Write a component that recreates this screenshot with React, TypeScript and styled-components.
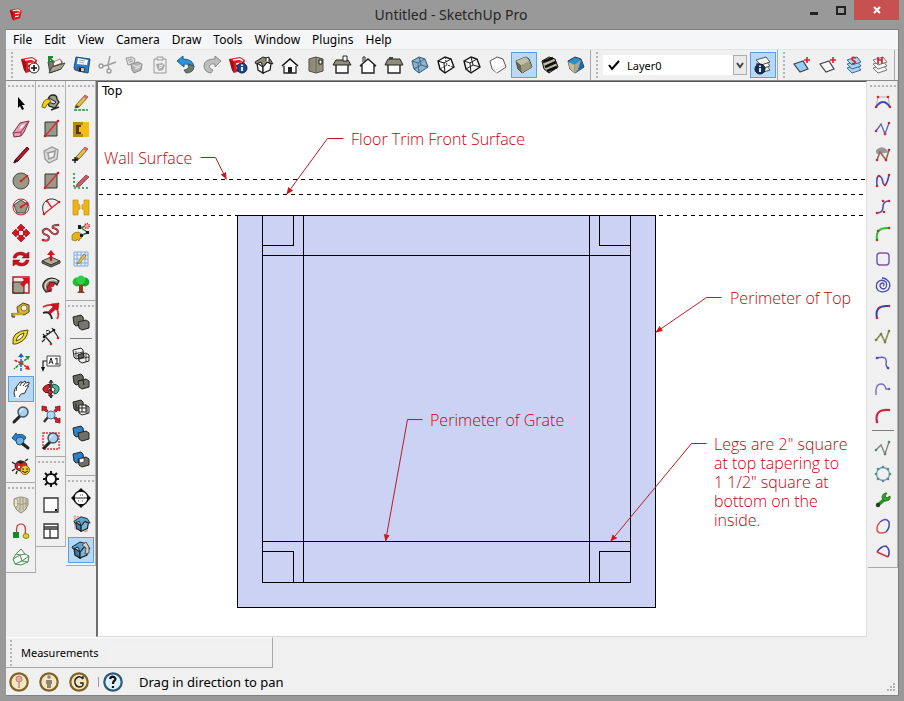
import React from "react";
import styled, { createGlobalStyle } from "styled-components";

const Global = createGlobalStyle`
  * { box-sizing: border-box; }
  html, body { margin: 0; height: 100%; }
  body { font-family: "Noto Sans", "Open Sans", sans-serif; font-size: 12px; color: #000; }
`;

/* ---------- icons, drawn on a 20 x 20 grid ---------- */

const cubeOuter = "M2 6L9 2L15 4L18 12L9 18L4 14Z";
const cubeEdges = "M2 6L8 8L15 4M8 8L9 18M4 14L11 10L18 12M9 2L11 10";

const SuMark = () => (
  <>
    <path d="M1 4L12 2L17 5L15 15L6 18L4 15Z" fill="#dc1b23" />
    <path d="M1 4L6 7L6 18L4 15Z" fill="#a80d14" />
    <path d="M5 5L12 4L15 6M8 9L14 8M8 13L13 12" stroke="#fff" strokeWidth="1.6" fill="none" />
  </>
);
const Blob = ({ a, b, x = "#222" }: { a: string; b: string; x?: string }) => (
  <>
    <path d="M2 4L10 2L12 4L13 11L5 13L3 11Z" fill={a} stroke={x} />
    <path d="M7 9L15 7L18 9L18 15L11 17L8 15Z" fill={b} stroke={x} />
  </>
);
const Glass = () => (
  <>
    <path d="M3 17L9 11" stroke="#222" strokeWidth="3" strokeLinecap="round" />
    <circle cx="12" cy="7" r="5" fill="#a9d0ee" stroke="#44525e" strokeWidth="1.4" />
    <path d="M9 7Q10 4 12 4" stroke="#fff" fill="none" />
  </>
);
const Pencil = ({ c = "#e6c13a" }: { c?: string }) => (
  <>
    <path d="M5 12L14 2L17 4L8 14L4 15Z" fill={c} stroke="#5c4b25" strokeWidth=".8" />
    <path d="M14 2L17 4L15 6L12 4Z" fill="#d9687a" />
    <path d="M4 15L6 12L8 14Z" fill="#333" />
  </>
);
const Layers = ({ c, s = "#555" }: { c: string; s?: string }) => (
  <g fill={c} stroke={s} strokeWidth="1">
    <path d="M3 13L8 18L17 15L13 10Z" />
    <path d="M3 9L8 14L17 11L13 6Z" />
    <path d="M3 5L8 10L17 7L13 2Z" />
  </g>
);
const House = ({ blue = false }: { blue?: boolean }) => (
  <>
    <path d="M3 8L9 12L9 18L4 15Z" fill={blue ? "#397fae" : "#fff"} stroke="#222" strokeWidth="1.3" />
    <path d="M9 12L13 7L17 9L16 15L9 18Z" fill={blue ? "#77b8df" : "#fff"} stroke="#222" strokeWidth="1.3" />
    <path d="M1 7L9 2L16 4L19 9L13 7L9 12L7 7L2 9Z" fill={blue ? "#5ba4d2" : "#8d8a78"} stroke="#222" />
  </>
);
const dot = (x: number, y: number, c = "#d21c2c", r = 1.3) => <circle key={`${x}-${y}`} cx={x} cy={y} r={r} fill={c} />;
const Curve = ({ d, c = "#4a47b5", pts = [], w = 1.6, p = "#c22b3c" }: { d: string; c?: string; pts?: number[][]; w?: number; p?: string }) => (
  <>
    <path d={d} fill="none" stroke={c} strokeWidth={w} />
    {pts.map(([x, y]) => dot(x, y, p))}
  </>
);

const icons: Record<string, React.ReactNode> = {
  "Add model": (<><SuMark /><circle cx="14" cy="13" r="5" fill="#fff" stroke="#222" /><path d="M14 10V16M11 13H17" stroke="#111" strokeWidth="1.6" /></>),
  "Open": (<><path d="M2 7L8 6L9 8L16 6L15 14L4 18Z" fill="#77776a" stroke="#444" /><path d="M7 7L14 4L16 8L8 11Z" fill="#fff" stroke="#a33" strokeWidth=".7" /><path d="M3 18L6 12L19 8L15 14Z" fill="#a7a792" stroke="#444" /><path d="M8 8L4 3M3 7L3 2L7 2" stroke="#178a2c" strokeWidth="2" fill="none" /></>),
  "Save": (<><path d="M4 2L18 4L16 18L3 15L2 13Z" fill="#2c7fc4" stroke="#194a7d" /><path d="M6 3L16 5L15 10L5 9Z" fill="#fff" /><path d="M7 5L13 6M7 7L12 8" stroke="#8ab" /><path d="M6 12L13 13L12 17L6 16Z" fill="#ccc" stroke="#333" /><path d="M8 13V16" stroke="#111" strokeWidth="2" /></>),
  "Cut": (<g stroke="#9c9c9c" fill="none" strokeWidth="1.4"><path d="M12 1L10 10L5 11M18 7L10 10L11 14" /><circle cx="3" cy="11" r="2" /><circle cx="11" cy="16" r="2" /></g>),
  "Copy": (<><path d="M2 3L8 2L11 4L10 9L4 10Z" fill="#ddd" stroke="#999" /><path d="M4 5L8 4M5 7L9 6" stroke="#999" /><path d="M7 9L14 7L18 9L17 15L10 18L8 15Z" fill="#b5b5b5" stroke="#8d8d8d" /><path d="M9 10L12 12L17 10M11 14L16 12" stroke="#eee" fill="none" /></>),
  "Paste": (<><path d="M4 4H16V18H4Z" fill="#eee" stroke="#9a9a9a" /><path d="M7 2H13V5H7Z" fill="#eee" stroke="#999" /><path d="M6 9L12 8L15 10L13 15L9 16L7 13Z" fill="#aaa" /><path d="M9 11L13 10M9 13L12 12" stroke="#fff" /></>),
  "Undo": (<><path d="M1 6L7 1L7 4Q17 4 18 12Q13 8 8 9L8 12Z" fill="#2b92dc" stroke="#185a91" /><path d="M18 11Q14 9 12 10Q14 14 8 15L10 18Q18 18 18 11Z" fill="#687b66" stroke="#344" strokeWidth=".7" /></>),
  "Redo": (<path d="M19 6L13 1L13 4Q2 4 2 11Q2 17 9 18L11 15Q7 14 7 11Q9 8 13 9L13 12Z" fill="#bdbdbd" stroke="#8a8a8a" />),
  "Model info": (<><SuMark /><circle cx="14" cy="13" r="5" fill="#17488c" stroke="#0a2350" /><path d="M14 12V16M14 9.5V11" stroke="#fff" strokeWidth="1.8" /></>),
  "Iso": (<><House /><path d="M12 6V3L15 2V7" fill="#fff" stroke="#222" /></>),
  "Top view": (<><path d="M3 4L10 2L17 4V16L10 18L3 16Z" fill="#96947f" stroke="#4c4b42" /><path d="M10 3V18" stroke="#5f5d4f" /><path d="M5 5V16M7 5V17M13 4V16" stroke="#85836f" /><path d="M13 5H16V9H13Z" fill="#f4f4f4" stroke="#222" /></>),
  "Front view": (<><path d="M4 9V18H16V9" fill="#fff" stroke="#222" strokeWidth="1.3" /><path d="M2 11L10 4L18 11" fill="#fff" stroke="#111" strokeWidth="1.6" /><path d="M8 12H12V18H8Z" fill="#222" /></>),
  "Right view": (<><path d="M4 9H16V18H4Z" fill="#fff" stroke="#222" strokeWidth="1.4" /><path d="M4 5H16L19 10H1Z" fill="#8f8d78" stroke="#222" /><path d="M11 1H15V6H11Z" fill="#fff" stroke="#222" /></>),
  "Back view": (<><path d="M5 7V2H7V6" fill="#fff" stroke="#222" /><path d="M2 11L10 4L18 11L16 10V18H4V10Z" fill="#fff" stroke="#222" strokeWidth="1.4" /></>),
  "Left view": (<><path d="M4 9H16V18H4Z" fill="#fff" stroke="#222" strokeWidth="1.4" /><path d="M4 4H16L19 10H1Z" fill="#8f8d78" stroke="#222" /><path d="M5 2H9V4H5Z" fill="#444" /></>),
  "X-ray": (<><path d={cubeOuter} fill="#8fb4ce" stroke="#2e5674" /><path d={cubeEdges} stroke="#3c6482" fill="none" /></>),
  "Back edges": (<><path d={cubeOuter} fill="#fff" stroke="#111" strokeWidth="1.4" /><path d="M2 6L8 8L15 4M8 8L9 18" stroke="#111" fill="none" /><path d="M4 14L11 10L18 12M9 2L11 10" stroke="#333" strokeDasharray="2 1" fill="none" /></>),
  "Wireframe": (<><path d={cubeOuter} fill="#f5f5f5" stroke="#111" strokeWidth="1.4" /><path d={cubeEdges} stroke="#222" fill="none" /></>),
  "Hidden line": (<><path d={cubeOuter} fill="#fff" stroke="#555" /><path d="M4 12L9 18M8 15L17 10" stroke="#ddd" fill="none" /></>),
  "Shaded": (<><path d="M2 6L12 2L15 4L18 12L8 18L4 14Z" fill="#b8b49a" stroke="#3a3828" /><path d="M2 6L7 10L8 18L4 14Z" fill="#69664f" /><path d="M7 10L15 6L18 12L8 18Z" fill="#9d9a7f" /><path d="M2 6L12 2L15 6L7 10Z" fill="#c3c0a9" /></>),
  "Textures": (<><path d={cubeOuter} fill="#bbb8a4" stroke="#111" /><path d="M3 7L13 3M5 12L16 7M7 16L17 12" stroke="#111" strokeWidth="2.6" /></>),
  "Monochrome": (<><path d={cubeOuter} fill="#2590d6" stroke="#333" /><path d="M2 7L9 10L9 18L4 14Z" fill="#c7bd95" /><path d="M8 10L15 5L18 12L9 18Z" fill="#1b6aa8" /><path d="M8 10L15 5L12 15L9 18Z" fill="#a9a68c" /></>),
  "Layer manager": (<><Layers c="#f5f5f0" /><circle cx="7" cy="14" r="5" fill="#152f63" stroke="#0a1530" /><path d="M7 13V17M7 10.5V12" stroke="#fff" strokeWidth="1.8" /></>),
  "Section fill": (<><path d="M2 9L11 6L16 14L8 17Z" fill="#9fcdf2" stroke="#31465a" strokeWidth="1.2" /><path d="M15 2V8M12 5H18" stroke="#e11c2b" strokeWidth="1.6" /></>),
  "Section add": (<><path d="M2 9L11 6L16 14L8 17Z" fill="#f7f7f7" stroke="#444" strokeWidth="1.2" /><path d="M15 2V8M12 5H18" stroke="#e11c2b" strokeWidth="1.6" /></>),
  "Show layers": (<><Layers c="#a9d3f5" s="#3c6c99" /><path d="M12 3Q8 1 8 4Q8 5 10 6Q12 7 11 8Q9 9 8 8" stroke="#e11c2b" strokeWidth="1.6" fill="none" /></>),
  "Hide layers": (<><Layers c="#f4f4f4" s="#777" /><path d="M8 2V9M12 2V9M8 5H12" stroke="#d11c2b" strokeWidth="1.6" fill="none" /></>),

  "Select": <path d="M7 4V15L9 13L11 17L13 16L11 12H14Z" fill="#000" />,
  "Eraser": (<><path d="M2 14L9 4L18 2L13 13L10 17L3 18Z" fill="#eb9cb5" stroke="#70303f" /><path d="M2 14L10 13L18 2M10 13V17" stroke="#843f51" fill="none" /><path d="M8 10L11 6L14 5L11 9Z" fill="#fff" /></>),
  "Line": (<><path d="M4 15L16 2L18 4L7 16L3 18Z" fill="#bb1724" stroke="#4c0a10" /><path d="M2 18L5 14L7 16Z" fill="#222" /></>),
  "Circle": (<><circle cx="10" cy="10" r="8" fill="#9a9987" stroke="#4b4b40" /><path d="M10 10L16 5" stroke="#dd2222" strokeWidth="1.6" />{dot(10, 10)}{dot(16, 5)}</>),
  "Polygon": (<><circle cx="10" cy="10" r="8" fill="none" stroke="#c52632" /><path d="M10 3L17 8L14 16H6L3 8Z" fill="#9a9987" stroke="#4b4b40" /><path d="M10 10L16 6" stroke="#dd2222" strokeWidth="1.6" />{dot(10, 10)}{dot(16, 6)}</>),
  "Move": (<><path d="M10 1L14 5L12 6V8H14L15 6L19 10L15 14L14 12H12V14L14 15L10 19L6 15L8 14V12H6L5 14L1 10L5 6L6 8H8V6L6 5Z" fill="#d9121d" stroke="#7d0b12" strokeWidth=".6" /><path d="M8 8H12V12H8Z" fill="#f0f0f0" /></>),
  "Rotate": (<g fill="#c9131e" stroke="#7d0b12" strokeWidth=".5"><path d="M2 9Q3 3 10 3Q13 3 15 5L18 3V9H11L13 7Q7 4 5 9Z" /><path d="M18 11Q17 17 10 17Q7 17 5 15L2 17V11H9L7 13Q13 16 15 11Z" /></g>),
  "Scale": (<><path d="M2 2H18V18H2Z" fill="#f6e6e6" stroke="#b51a25" strokeWidth="1.4" /><path d="M2 7H13V18H2Z" fill="#a09f8b" stroke="#222" /><path d="M9 9L13 5L11 3H18V10L16 8L12 12Z" fill="#d6101b" /></>),
  "Tape": (<><path d="M6 6L12 2L18 4V11L13 14L7 12Z" fill="#d8b327" stroke="#4e4420" /><circle cx="13" cy="7" r="3" fill="#f6edc4" stroke="#776" /><path d="M12 13L3 13V16" stroke="#c5a62c" strokeWidth="2.4" fill="none" /><path d="M1 12V16H4" stroke="#222" fill="none" /></>),
  "Protractor": (<><path d="M2 17Q0 4 17 3Q16 14 5 17Z" fill="#f2d928" stroke="#514b14" /><path d="M5 14Q6 8 13 6Q12 12 5 14Z" fill="#f3f3f3" stroke="#514b14" /></>),
  "Axes": (<><path d="M10 10V3M10 10V18" stroke="#1b68c5" strokeWidth="1.6" strokeDasharray="4 1" /><path d="M10 10L17 5M10 10L3 16" stroke="#12963b" strokeWidth="1.6" strokeDasharray="3 1" /><path d="M10 10L17 15M10 10L3 7" stroke="#d6222c" strokeWidth="1.6" strokeDasharray="3 1" /><path d="M7 4L10 0L13 4Z" fill="#1b68c5" /><path d="M14 3H19L17 7Z" fill="#12963b" /><path d="M19 17L14 16L17 12Z" fill="#d6222c" /></>),
  "Pan": (<><path d="M5 19L3 15L3 11L6 7L9 4L11 3L12 4L15 2L16 3L18 3L17 6L19 8L17 9L15 10L14 14L11 15L8 19Z" fill="#fff" /><path d="M4 18L3 14Q3 10 6 7L9 3L11 3L9 7M11 4L14 2L15 3L12 7M15 4L18 3L18 5L14 8M16 7L18 7L15 11L14 14L10 15L8 18M6 8L5 12" fill="none" stroke="#333" strokeWidth="1" /></>),
  "Zoom": <Glass />,
  "Previous": (<><path d="M1 7L5 2L6 4Q13 2 15 7L12 10Q9 7 6 9L6 11Z" fill="#2386d0" stroke="#174f7b" /><circle cx="9" cy="10" r="4" fill="#69b3e8" stroke="#29506e" /><path d="M12 13L17 17" stroke="#222" strokeWidth="3" strokeLinecap="round" /></>),
  "Position camera": (<><path d="M4 7L1 5M4 12L1 14M14 4L17 2M6 14L5 17" stroke="#222" strokeWidth="1.4" /><ellipse cx="10" cy="9" rx="6" ry="5" fill="#d3202b" stroke="#222" /><path d="M6 5Q9 2 13 5L10 7Z" fill="#222" /><path d="M7 9H9V11H7Z" fill="#fff" /><circle cx="14" cy="13" r="4.5" fill="#f5cd29" stroke="#7c6110" /><path d="M12 11V13M16 11V13M11 14Q14 17 17 14" stroke="#222" fill="none" /></>),
  "Shade": (<><path d="M3 4Q10 0 17 4V10Q15 16 10 18Q5 16 3 10Z" fill="#cfccb4" stroke="#8f8c75" /><path d="M6 4V13M9 3V16M12 3V15M15 4V12M3 8Q10 11 17 8" stroke="#a09d84" fill="none" /><path d="M5 5V11" stroke="#f4f1da" strokeWidth="1.6" /></>),
  "Path follow": (<><path d="M6 13Q4 3 10 3Q16 3 14 14" stroke="#c83644" fill="none" strokeWidth="1.2" /><path d="M2 11H8V17H2Z" fill="#118a25" /><ellipse cx="15" cy="15" rx="3" ry="2.4" fill="#d9d322" stroke="#8a8513" /></>),
  "Mesh": (<path d="M2 12L5 7L10 2L14 7L18 9L17 15L10 18L4 17ZM2 12L9 8L14 7M9 8L5 7M9 8L11 14L17 15M11 14L4 17M18 9L11 14" fill="#f0f7f1" stroke="#4f8a60" />),

  "Paint": (<><path d="M7 7Q8 2 12 2Q16 2 16 6L18 9L14 15L8 13Z" fill="#9e9e88" stroke="#222" strokeWidth="1.3" /><path d="M8 5L15 9L13 11L7 9Z" fill="#ddd" stroke="#222" /><path d="M1 14Q2 6 8 6L10 9Q6 10 4 15Z" fill="#f0ce19" stroke="#74620b" /><path d="M10 17L18 14" stroke="#222" strokeWidth="1.6" /></>),
  "Rectangle": (<><path d="M4 3H16V17H4Z" fill="#9a9987" stroke="#33332b" /><path d="M4 17L17 2" stroke="#e02631" strokeWidth="1.3" />{dot(4, 17)}{dot(17, 2)}</>),
  "Component": (<><path d="M3 6L11 2L17 5L16 14L8 18L4 14Z" fill="#ddd" stroke="#989898" strokeWidth="1.3" /><path d="M7 8L14 6L13 12L8 14Z" fill="#f5f5f5" stroke="#999" strokeWidth="1.6" /><path d="M3 6L7 8L8 14M13 6L15 4" stroke="#aaa" fill="none" /></>),
  "Arc": (<><path d="M3 17Q-1 8 6 3Q12 0 18 5" fill="none" stroke="#333" /><path d="M3 17L18 5M6 4L11 11" stroke="#da2630" fill="none" strokeWidth="1.3" />{dot(3, 17)}{dot(18, 5)}{dot(6, 4)}</>),
  "Freehand": (<><path d="M2 17Q8 19 8 14Q7 12 3 11Q0 8 4 6Q7 5 11 10Q15 13 17 9Q17 6 12 5Q10 2 17 2" fill="none" stroke="#444" strokeWidth="2" /><path d="M2 17Q8 19 8 14Q7 12 3 11Q0 8 4 6Q7 5 11 10Q15 13 17 9Q17 6 12 5Q10 2 17 2" fill="none" stroke="#e0404c" strokeWidth="1.2" />{dot(2, 17)}{dot(17, 2)}</>),
  "Push pull": (<><path d="M1 12L10 8L19 12L10 16Z" fill="#b0ae98" stroke="#3b3a30" /><path d="M1 12V14L10 18L19 14V12L10 16Z" fill="#77745f" stroke="#3b3a30" /><path d="M10 12V5" stroke="#d8101c" strokeWidth="2.4" /><path d="M6 6L10 1L14 6Z" fill="#d8101c" /></>),
  "Follow me": (<><path d="M5 17Q-1 11 4 6Q10 0 18 6L16 10Q12 6 9 9Q6 12 10 16Z" fill="#898673" stroke="#222" strokeWidth="1.2" /><path d="M5 14Q3 10 6 7Q11 3 16 6" stroke="#ddd9cc" strokeWidth="1.4" fill="none" /><path d="M7 16Q4 11 9 9L8 7L14 8L12 12L11 11Q9 12 11 15Z" fill="#d8202a" stroke="#60080f" strokeWidth=".6" /></>),
  "Offset": (<><path d="M2 6Q14 0 17 11Q18 15 16 18" fill="none" stroke="#e02531" strokeWidth="1.6" /><path d="M2 12Q9 9 11 18" fill="none" stroke="#222" strokeWidth="1.8" /><path d="M7 11L12 6L10 3L18 2L17 9L15 8L9 13Z" fill="#d6101b" stroke="#7b1018" strokeWidth=".5" /></>),
  "Dimension": (<><path d="M3 10L13 3M2 7L10 16M11 1L17 10M4 12L1 15" stroke="#222" strokeWidth="1.2" fill="none" /><path d="M5 4Q8 2 9 5Q7 8 5 6" stroke="#222" fill="none" />{dot(10, 17)}{dot(17, 11)}{dot(3, 10, "#111")}{dot(13, 3, "#111")}</>),
  "Text": (<><path d="M6 3H19V13H6Z" fill="#fff" stroke="#444" /><path d="M6 8H2V15" stroke="#222" strokeWidth="1.2" fill="none" /><path d="M0 14H4L2 19Z" fill="#111" /><path d="M8 11L10 5L12 11M9 9H11M14 6L16 5V11M14 11H18" stroke="#222" fill="none" /></>),
  "Orbit": (<><path d="M10 1V19" stroke="#222" strokeWidth="1.6" /><path d="M8 4L10 1L12 4M8 16L10 19L12 16" stroke="#222" fill="none" /><path d="M9 5Q1 7 2 11Q3 14 8 14V17L12 13L8 10V12Q4 11 9 8Z" fill="#d8202a" stroke="#5c0a10" /><path d="M12 5Q19 6 18 11Q17 15 13 15L13 12Q16 10 11 8Z" fill="#4fb58e" stroke="#155840" /></>),
  "Zoom extents": (<><path d="M7 12L3 17" stroke="#333" strokeWidth="2.4" /><circle cx="10" cy="10" r="4" fill="#b4d7f2" stroke="#4c718e" /><path d="M1 1L6 2L5 3L7 6L5 7L3 5L1 6ZM19 1L14 2L15 3L13 6L15 7L17 5L19 6ZM19 18L14 17L15 16L13 13L15 12L17 14L19 13Z" fill="#d6202a" stroke="#67080f" strokeWidth=".7" /></>),
  "Zoom window": (<><path d="M2 2H18V18H2Z" fill="none" stroke="#df3440" strokeDasharray="2 1" strokeWidth="1.4" /><Glass /></>),
  "Gear": (<><circle cx="10" cy="10" r="5" fill="#fff" stroke="#111" strokeWidth="2" /><path d="M10 2V5M10 15V18M2 10H5M15 10H18M4 4L6.5 6.5M13.5 13.5L16 16M4 16L6.5 13.5M13.5 6.5L16 4" stroke="#111" strokeWidth="2" /></>),
  "Blank panel": (<><path d="M3 3H17V17H3Z" fill="#fff" stroke="#333" strokeWidth="1.3" /><path d="M14 14H16V16H14Z" /></>),
  "Layout panel": (<path d="M3 3H17V17H3ZM3 8H17M9 8V17M3 6H17" fill="#fff" stroke="#333" strokeWidth="1.3" />),

  "Guide pencil": (<><Pencil /><path d="M3 17H17" stroke="#249239" strokeWidth="1.6" strokeDasharray="3 1" /></>),
  "Gold bracket": (<><path d="M2 3H12V18H2Z" fill="#bd8710" /><path d="M12 3H18V18H12Z" fill="#f3bd12" /><path d="M5 6H10V8H8V13H10V15H5Z" fill="#4c3a10" /><path d="M10 6H12V8H10ZM10 13H12V15H10ZM8 8H13V13H8Z" fill="#f3bd12" /></>),
  "Point pencil": (<><Pencil /><path d="M4 12V18M1 15H7" stroke="#111" strokeWidth="1.4" /></>),
  "Guide eraser": (<><path d="M3 2V16M3 17H17" stroke="#219338" strokeWidth="1.6" strokeDasharray="2 2" /><path d="M6 13L15 4L18 6L9 15L5 16Z" fill="#c65d68" stroke="#703038" strokeWidth=".7" /></>),
  "Gold mirror": (<g fill="#edb417" stroke="#c28c12" strokeWidth=".7"><path d="M2 3H7V7L9 8V12L7 13V18H2Z" /><path d="M18 3H13V7L11 8V12L13 13V18H18Z" /></g>),
  "Move points": (<><path d="M1 12Q3 9 7 9L11 11L10 16L9 15L8 18L6 16L5 18L1 17Z" fill="#e7b11b" stroke="#8c6a0d" strokeWidth=".7" /><path d="M9 4L16 9M9 5L15 3M9 13L18 9" stroke="#237b35" strokeWidth="1.4" /><path d="M7 2H10V6H7ZM15 8H18V11H15ZM9 11H12V14H9Z" fill="#1c1c1c" /><circle cx="16" cy="3" r="2.4" fill="#f3a2a8" stroke="#d82331" strokeDasharray="1 1" strokeWidth="1.5" /></>),
  "Grid pencil": (<><path d="M3 3H17V17H3Z" fill="#e7f1fd" stroke="#81a8d9" /><path d="M6 3V17M10 3V17M14 3V17M3 6H17M3 10H17M3 14H17" stroke="#82aadc" /><path d="M7 13L13 5L15 7L9 14L6 15Z" fill="#ecc33a" stroke="#6e5b23" strokeWidth=".6" /></>),
  "Tree": (<><path d="M8 10H12L12 16L14 18H6L8 16Z" fill="#8d3a26" /><circle cx="6" cy="7" r="4.4" fill="#1fbc35" /><circle cx="14" cy="7" r="4.4" fill="#13ae2b" /><circle cx="10" cy="5" r="4.4" fill="#2bd143" /><path d="M10 9V16M10 13L14 9M10 12L7 9" stroke="#9a3e20" fill="none" /></>),
  "Outer shell": <Blob a="#706f66" b="#77766c" />,
  "Intersect": (<><Blob a="none" b="none" /><path d="M7 9L12 7L13 11L8 13Z" fill="#625f57" stroke="#222" /><path d="M5 5V12M15 8V16M3 8L12 6M8 13L18 11" stroke="#222" strokeWidth=".8" /></>),
  "Union": (<><Blob a="#68675f" b="#747368" /><path d="M7 9L12 8L13 13" stroke="#222" fill="none" /></>),
  "Subtract": (<><Blob a="#6b6a61" b="none" /><path d="M8 7H15V14H8Z" fill="#fff" stroke="#222" /><path d="M5 5V12M16 8V16M11 7V14M8 10H15" stroke="#222" /></>),
  "Trim": <Blob a="#2a83cb" b="#706f66" />,
  "Split": (<><Blob a="#2a83cb" b="#706f66" /><path d="M8 9L13 8V12L9 13Z" fill="#fff" stroke="#222" strokeWidth=".6" /></>),
  "Section plane": (<><circle cx="10" cy="10" r="7" fill="#fff" stroke="#222" strokeWidth="1.4" /><path d="M3 10H17" stroke="#222" /><path d="M6 4L10 0L14 4ZM6 16L10 20L14 16ZM4 6L0 10L4 14ZM16 6L20 10L16 14Z" fill="#111" /><path d="M9 7H12M7 13H9M11 13H13" stroke="#555" strokeDasharray="1 1" /></>),
  "Display sections": (<><path d="M3 2L15 4L16 18L4 15Z" fill="#e8c3ca" stroke="#d18a95" strokeDasharray="2 1" /><g transform="translate(2 1) scale(.9)"><House blue /></g></>),
  "Section cuts": (<><House blue /><path d="M11 5L15 2L18 7V13L14 14L15 8Z" fill="#cfcfc7" stroke="#555" /></>),

  "Bezier": (<><path d="M5 4H15M3 14L5 4M17 14L15 4" stroke="#b9b1b1" /><Curve d="M3 14Q10 4 17 14" w={2} pts={[[5, 4], [15, 4], [3, 14], [17, 14]]} /></>),
  "Polyline blue": <Curve d="M3 12L8 5L12 15L16 4" w={1.3} c="#615faf" pts={[[3, 12], [16, 4], [12, 15]]} />,
  "Polyline smoke": (<><path d="M4 9Q1 5 6 3Q10 1 13 4Q17 8 12 8Z" fill="#999" /><Curve d="M4 15L7 7L13 15L16 5" c="#946b50" pts={[[4, 15], [16, 5], [13, 15]]} /></>),
  "Spline": <Curve d="M4 15Q3 5 6 5Q9 5 10 12Q13 18 16 4" pts={[[4, 15], [6, 5], [12, 14], [16, 4]]} />,
  "Step curve": <Curve d="M4 16Q10 16 10 10Q10 4 16 4" c="#5452b8" pts={[[4, 16], [11, 15], [10, 4], [16, 4]]} />,
  "Green arc": <Curve d="M4 17Q2 4 16 5" c="#22c92d" w={2} pts={[[4, 17], [5, 8], [16, 5]]} />,
  "Rounded box": (<><rect x="4" y="4" width="12" height="12" rx="3" fill="none" stroke="#6759ba" strokeWidth="1.4" /><path d="M7 4H13M7 16H13" stroke="#ce6c8a" /></>),
  "Spiral": <Curve d="M10 11Q12 9 10 8Q7 8 7 11Q8 14 11 14Q15 12 13 7Q8 3 4 8Q2 13 6 16Q11 18 15 15Q18 11 16 7Q13 3 9 3" w={1.3} c="#4b4bb5" />,
  "Arc blue": <Curve d="M4 17Q1 4 16 5" w={2} c="#3c39aa" pts={[[4, 17], [6, 7], [16, 5]]} />,
  "Polyline olive": <Curve d="M3 13L8 7L12 15L16 4" c="#8a8e46" p="#728044" pts={[[3, 13], [8, 7], [16, 4], [12, 15]]} />,
  "Hook": <Curve d="M4 5Q15 2 13 11Q13 14 16 16" c="#625eb3" w={1.4} pts={[[4, 5], [15, 15]]} p="#4f4aac" />,
  "Cane": <Curve d="M3 16Q2 5 8 5Q12 5 13 10H16" c="#7770bd" w={1.4} pts={[[16, 10]]} p="#6863b0" />,
  "Arc red": <Curve d="M4 17Q1 4 16 5" w={2.2} c="#c52a44" pts={[[4, 17], [16, 5]]} />,
  "Polyline teal": <Curve d="M3 12L8 7L12 16L16 4" c="#7c8278" p="#578266" w={1.3} pts={[[3, 12], [16, 4], [12, 16]]} />,
  "Dotted circle": (<><circle cx="10" cy="10" r="6.5" fill="none" stroke="#78a7a9" strokeWidth="1.4" />{[[10, 3], [15, 5], [17, 10], [15, 15], [10, 17], [5, 15], [3, 10], [5, 5]].map(([x, y]) => dot(x, y, "#558b8c"))}</>),
  "Wrench": (<><path d="M5 15L12 9" stroke="#2e8d22" strokeWidth="3.6" /><path d="M9 8Q9 3 14 3L12 6L14 8L17 6Q18 11 12 11Z" fill="#35a827" stroke="#237319" /><circle cx="5" cy="15" r="2.2" fill="#263b20" /></>),
  "Closed curve": (<><path d="M7 6Q13 1 16 6Q17 12 13 16" fill="none" stroke="#4b49b3" strokeWidth="1.5" /><path d="M13 16Q4 19 4 13Q4 9 7 6" fill="none" stroke="#dc5260" strokeWidth="1.5" /></>),
  "Closed wedge": (<><path d="M4 10Q8 4 13 4Q18 8 15 15" fill="none" stroke="#4643b0" strokeWidth="1.6" /><path d="M4 10L15 15" fill="none" stroke="#d03648" strokeWidth="1.6" /></>),
};

/* ---------- shared parts ---------- */

const Icon = styled.svg.attrs({ viewBox: "0 0 20 20", "aria-hidden": true })`
  display: block;
  width: 20px;
  height: 20px;
  overflow: visible;
`;

const ToolButton = styled.button<{ $active?: boolean }>`
  flex: none;
  display: grid;
  place-items: center;
  width: 26px;
  height: 26px;
  padding: 0;
  border: 1px solid ${(p) => (p.$active ? "#5c9ee0" : "transparent")};
  background: ${(p) => (p.$active ? "#b8d8f8" : "transparent")};
`;

const Tool = ({ name, active }: { name: string; active?: boolean }) => (
  <ToolButton type="button" aria-label={name} title={name} $active={active} aria-pressed={active}>
    <Icon>{icons[name]}</Icon>
  </ToolButton>
);

const Grip = styled.span<{ $vertical?: boolean }>`
  flex: none;
  width: ${(p) => (p.$vertical ? "2px" : "26px")};
  height: ${(p) => (p.$vertical ? "26px" : "2px")};
  margin: ${(p) => (p.$vertical ? "0 4px" : "4px 2px 3px")};
  background: repeating-linear-gradient(${(p) => (p.$vertical ? "180deg" : "90deg")}, #b4b4b4 0 2px, transparent 2px 4px);
`;

/* ---------- window frame ---------- */

const Frame = styled.div`
  height: 100vh;
  display: flex;
  flex-direction: column;
  padding: 0 5px 5px 6px;
  background: #999;
`;
const TitleBar = styled.header`
  flex: none;
  display: flex;
  align-items: center;
  height: 29px;
  padding-left: 3px;
`;
const Title = styled.h1`
  flex: 1;
  margin: 0;
  padding-left: 78px;
  text-align: center;
  font-size: 14px;
  font-weight: 400;
  line-height: 28px;
  color: #262626;
`;
const Caption = styled.button<{ $close?: boolean }>`
  align-self: flex-start;
  display: grid;
  place-items: center;
  width: ${(p) => (p.$close ? "45px" : "27px")};
  height: 20px;
  padding: 0;
  border: 0;
  background: ${(p) => (p.$close ? "#c75050" : "transparent")};
`;
const Client = styled.div`
  flex: 1;
  min-height: 0;
  display: flex;
  flex-direction: column;
  border: 1px solid #808080;
  border-left: 0;
  background: #f0f0f0;
`;
const MenuBar = styled.nav`
  flex: none;
  display: flex;
  gap: 12px;
  height: 19px;
  padding-left: 7px;
  background: #f5f6f7;
`;
const MenuItem = styled.button`
  padding: 0;
  border: 0;
  background: none;
  font: inherit;
  line-height: 19px;
`;

/* ---------- horizontal toolbar ---------- */

const TopBar = styled.div`
  flex: none;
  display: flex;
  height: 31px;
  border-top: 1px solid #e4e4e4;
`;
const TopGroup = styled.div`
  display: flex;
  align-items: center;
  padding: 0 1px;
  border-right: 1px solid #a8a8a8;
`;
const LayerBox = styled.label`
  position: relative;
  display: flex;
  align-items: center;
  width: 144px;
  height: 20px;
  margin: 0 3px 0 1px;
  padding-left: 4px;
  background: #fff;
`;
const LayerSelect = styled.select`
  flex: 1;
  height: 20px;
  padding: 0 0 0 6px;
  border: 0;
  appearance: none;
  background: transparent;
  font: inherit;
  font-size: 11px;
  color: #000;
`;
const DropArrow = styled.span`
  position: absolute;
  top: 0;
  right: 0;
  display: grid;
  place-items: center;
  width: 14px;
  height: 20px;
  border: 1px solid #adadad;
  background: #eaeaea;
  pointer-events: none;
`;

/* ---------- body: tool columns and drawing area ---------- */

const Body = styled.main`
  flex: 1;
  min-height: 0;
  display: flex;
  border-top: 1px solid #8a8a8a;
`;
const Column = styled.div`
  flex: none;
  width: 30px;
`;
const ColumnGroup = styled.div`
  display: flex;
  flex-direction: column;
  align-items: center;
  padding-bottom: 2px;
  border-right: 1px solid #b0b0b0;
  border-bottom: 1px solid #a8a8a8;
`;
const Divider = styled.hr`
  width: 22px;
  height: 1px;
  margin: 2px 0 4px;
  border: 0;
  background: #7c7c7c;
`;
const Canvas = styled.section`
  position: relative;
  flex: 1;
  min-width: 0;
  margin-right: 1px;
  overflow: hidden;
  border-top: 1px solid #555;
  border-left: 2px solid #6e6e6e;
  border-right: 1px solid #e0e0e0;
  border-bottom: 1px solid #d8d8d8;
  background: #fff;
`;
const Drawing = styled.svg`
  position: absolute;
  inset: 0;
  width: 100%;
  height: 100%;
`;
const ViewName = styled.span`
  position: absolute;
  left: 4px;
  top: 0;
  font: 12px/18px "DejaVu Sans", sans-serif;
`;
const Note = styled.p<{ $x: number; $y: number }>`
  position: absolute;
  left: ${(p) => p.$x}px;
  top: ${(p) => p.$y}px;
  margin: 0;
  color: #c8000a;
  font: 300 16px/19px "Open Sans", sans-serif;
  white-space: pre;
`;

/* ---------- bottom ---------- */

const Measure = styled.label`
  flex: none;
  display: flex;
  align-items: center;
  width: 267px;
  height: 31px;
  border-top: 1px solid #fbfbfb;
  border-right: 1px solid #a8a8a8;
  border-bottom: 1px solid #a8a8a8;
  font-size: 11px;
`;
const MeasureText = styled.span`
  padding: 0 12px 0 5px;
`;
const MeasureInput = styled.input`
  flex: 1;
  min-width: 0;
  height: 20px;
  border: 0;
  background: #f1f1f1;
`;
const Status = styled.footer`
  flex: none;
  display: flex;
  align-items: center;
  height: 27px;
  padding: 0 2px 0 3px;
  font-size: 13px;
`;
const StatusButton = styled.button`
  width: 20px;
  height: 20px;
  margin-right: 10px;
  padding: 0;
  border: 0;
  background: none;
`;
const StatusRule = styled.span`
  width: 1px;
  height: 10px;
  margin-right: 4px;
  margin-left: -1px;
  background: #999;
`;
const StatusText = styled.span`
  flex: 1;
  padding-left: 6px;
`;
const ResizeGrip = styled.svg`
  align-self: flex-end;
  width: 10px;
  height: 12px;
`;

const menus = ["File", "Edit", "View", "Camera", "Draw", "Tools", "Window", "Plugins", "Help"];
const standardTools = ["Add model", "Open", "Save", "Cut", "Copy", "Paste", "Undo", "Redo", "Model info", "Iso", "Front view", "Top view", "Right view", "Back view", "Left view", "X-ray", "Back edges", "Wireframe", "Hidden line", "Shaded", "Textures", "Monochrome"];
const sectionTools = ["Section fill", "Section add", "Show layers", "Hide layers"];
const leftColumns = [
  [
    ["Select", "Eraser", "Line", "Circle", "Polygon", "Move", "Rotate", "Scale", "Tape", "Protractor", "Axes", "Pan", "Zoom", "Previous", "Position camera"],
    ["Shade", "Path follow", "Mesh"],
  ],
  [
    ["Paint", "Rectangle", "Component", "Rectangle", "Arc", "Freehand", "Push pull", "Follow me", "Offset", "Dimension", "Text", "Orbit", "Zoom extents", "Zoom window"],
    ["Gear", "Blank panel", "Layout panel"],
  ],
  [
    ["Guide pencil", "Gold bracket", "Point pencil", "Guide eraser", "Gold mirror", "Move points", "Grid pencil", "Tree"],
    ["Outer shell", "-", "Intersect", "Union", "Subtract", "Trim", "Split"],
    ["Section plane", "Display sections", "Section cuts"],
  ],
];
const rightTools = ["Bezier", "Polyline blue", "Polyline smoke", "Spline", "Step curve", "Green arc", "Rounded box", "Spiral", "Arc blue", "Polyline olive", "Hook", "Cane", "Arc red", "-", "Polyline teal", "Dotted circle", "Wrench", "Closed curve", "Closed wedge"];
const activeTools = new Set(["Shaded", "Pan", "Section cuts"]);

const ToolGroup = ({ tools }: { tools: string[] }) => (
  <ColumnGroup role="toolbar">
    <Grip />
    {tools.map((t, i) => (t === "-" ? <Divider key={i} /> : <Tool key={i} name={t} active={activeTools.has(t)} />))}
  </ColumnGroup>
);

const notes = [
  { x: 6, y: 67, text: "Wall Surface", line: "M103 75H118L129 97" },
  { x: 253, y: 48, text: "Floor Trim Front Surface", line: "M246 56H230L189 112" },
  { x: 632, y: 207, text: "Perimeter of Top", line: "M624 215H609L558 250" },
  { x: 332, y: 329, text: "Perimeter of Grate", line: "M325 337H310L288 459" },
  { x: 616, y: 353, text: 'Legs are 2" square\nat top tapering to\n1 1/2" square at\nbottom on the\ninside.', line: "M609 361H594L513 459" },
];

const Plan = () => (
  <Drawing aria-hidden="true">
    <defs>
      <marker id="head" markerUnits="userSpaceOnUse" markerWidth="8" markerHeight="8" refX="7" refY="3" orient="auto">
        <path d="M0 0L7 3L0 6Z" fill="#d8141c" />
      </marker>
    </defs>
    <g stroke="#000" strokeDasharray="4 4" shapeRendering="crispEdges">
      <line x1="3" y1="97.5" x2="100%" y2="97.5" />
      <line x1="1" y1="112.5" x2="100%" y2="112.5" />
      <line x1="1" y1="133.5" x2="100%" y2="133.5" />
    </g>
    <g transform="translate(.5 .5)" fill="none" stroke="#000" shapeRendering="crispEdges">
      <rect x="139" y="133" width="418" height="392" fill="#ccd2f4" />
      <path d="M164 133V500H532V133M205 133V500M491 133V500M164 173H532M164 459H532" />
      <path d="M195 133V163H164M501 133V163H532M195 500V469H164M501 500V469H532" />
    </g>
    <g transform="translate(-.5 .5)" fill="none" stroke="#b81d24">
      {notes.map((n) => <path key={n.text} d={n.line} markerEnd="url(#head)" />)}
    </g>
  </Drawing>
);

const Badge = ({ children, blue }: { children: React.ReactNode; blue?: boolean }) => (
  <Icon>
    <circle cx="10" cy="10" r="8.7" fill={blue ? "#e0f0fa" : "#f4e7c0"} stroke={blue ? "#285a7e" : "#806126"} strokeWidth="2.2" />
    {children}
  </Icon>
);

export default function App() {
  return (
    <Frame>
      <Global />
      <TitleBar>
        <svg width="15" height="15" viewBox="0 0 20 20" aria-hidden="true"><SuMark /></svg>
        <Title>Untitled - SketchUp Pro</Title>
        <Caption type="button" aria-label="Minimize"><svg width="10" height="10"><path d="M1 7H9V10H1Z" fill="#222" /></svg></Caption>
        <Caption type="button" aria-label="Maximize"><svg width="10" height="9"><path d="M1 1H9V8H1Z" fill="none" stroke="#222" strokeWidth="2" /></svg></Caption>
        <Caption type="button" aria-label="Close" $close><svg width="8" height="8"><path d="M1 1L7 7M7 1L1 7" stroke="#fff" strokeWidth="2" /></svg></Caption>
      </TitleBar>
      <Client>
        <MenuBar>
          {menus.map((m) => <MenuItem key={m} type="button">{m}</MenuItem>)}
        </MenuBar>
        <TopBar>
          <TopGroup role="toolbar">
            <Grip $vertical />
            {standardTools.map((t) => <Tool key={t} name={t} active={activeTools.has(t)} />)}
          </TopGroup>
          <TopGroup role="toolbar">
            <Grip $vertical />
            <LayerBox>
              <svg width="14" height="12" aria-hidden="true"><path d="M2 6L5 10L12 2" fill="none" stroke="#000" strokeWidth="2" /></svg>
              <LayerSelect aria-label="Layer" defaultValue="Layer0"><option>Layer0</option></LayerSelect>
              <DropArrow><svg width="8" height="8"><path d="M1 2L4 6L7 2" fill="none" stroke="#444" strokeWidth="2" /></svg></DropArrow>
            </LayerBox>
            <Tool name="Layer manager" active />
          </TopGroup>
          <TopGroup role="toolbar">
            <Grip $vertical />
            {sectionTools.map((t) => <Tool key={t} name={t} />)}
          </TopGroup>
        </TopBar>
        <Body>
          {leftColumns.map((groups, c) => (
            <Column key={c}>{groups.map((g, i) => <ToolGroup key={i} tools={g} />)}</Column>
          ))}
          <Canvas>
            <Plan />
            <ViewName>Top</ViewName>
            {notes.map((n) => <Note key={n.text} $x={n.x} $y={n.y}>{n.text}</Note>)}
          </Canvas>
          <Column><ToolGroup tools={rightTools} /></Column>
        </Body>
        <Measure>
          <Grip $vertical />
          <MeasureText>Measurements</MeasureText>
          <MeasureInput type="text" />
        </Measure>
        <Status>
          <StatusButton type="button" aria-label="Geo-location"><Badge><circle cx="10" cy="7" r="3" fill="#eba8a0" stroke="#c98278" /><path d="M10 10V16" stroke="#b9968a" strokeWidth="1.6" /></Badge></StatusButton>
          <StatusButton type="button" aria-label="Credits"><Badge><circle cx="10" cy="5" r="1.8" fill="#8d8670" /><path d="M7 8H13V12H12V16H8V12H7Z" fill="#8d8670" /></Badge></StatusButton>
          <StatusButton type="button" aria-label="Sign in"><Badge><path d="M14 7Q12 4 9 5Q5 7 6 11Q7 15 11 15Q13 15 14 13V11H11M14 4V7" fill="none" stroke="#222" strokeWidth="1.4" /></Badge></StatusButton>
          <StatusRule />
          <StatusButton type="button" aria-label="Help"><Badge blue><path d="M7 7Q8 4 11 5Q14 7 11 9Q10 10 10 12M10 14V16" fill="none" stroke="#111" strokeWidth="2.2" /></Badge></StatusButton>
          <StatusText>Drag in direction to pan</StatusText>
          <ResizeGrip aria-hidden="true"><path d="M7 0H9V2H7ZM4 3H6V5H4ZM7 3H9V5H7ZM1 6H3V8H1ZM4 6H6V8H4ZM7 6H9V8H7Z" fill="#b4b4b4" /></ResizeGrip>
        </Status>
      </Client>
    </Frame>
  );
}
